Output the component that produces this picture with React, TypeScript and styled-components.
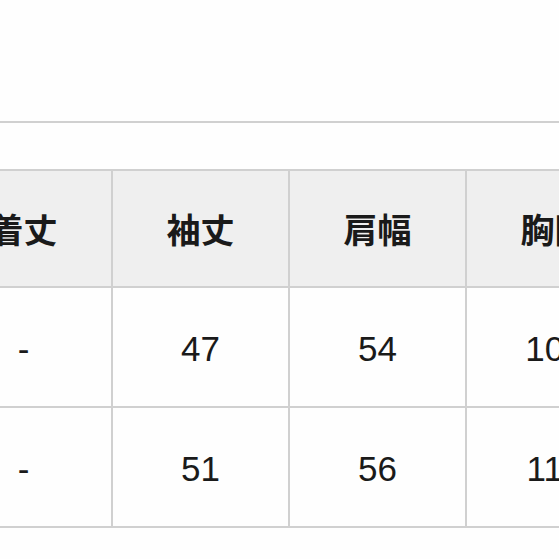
import React from "react";
import styled, { createGlobalStyle } from "styled-components";

const GlobalStyle = createGlobalStyle`
  html, body {
    margin: 0;
    padding: 0;
    background: #fefefe;
    overflow: hidden;
  }
  body {
    font-family: "Liberation Sans", "Noto Sans CJK JP", sans-serif;
    color: #1b1b1b;
  }
`;

const Page = styled.div`
  width: 559px;
  height: 559px;
  overflow: hidden;
  padding-top: 121px;
  box-sizing: border-box;
`;

const Divider = styled.div`
  height: 2px;
  background: #d0d0d0;
`;

const SizeTable = styled.table`
  width: 710px;
  min-width: 710px;
  margin-top: 46px;
  margin-left: -66px;
  border-collapse: collapse;
  table-layout: fixed;
`;

const HeadCell = styled.th`
  width: 175px;
  height: 115px;
  padding: 0;
  border: 2px solid #d0d0d0;
  background: #efefef;
  font-family: "Noto Sans CJK JP", "Liberation Sans", sans-serif;
  font-size: 34px;
  font-weight: 700;
  text-align: center;
  vertical-align: middle;
  color: #1a1a1a;
`;

const Cell = styled.td`
  width: 175px;
  height: 114px;
  padding: 4px 0 0;
  border: 2px solid #d0d0d0;
  background: #fefefe;
  font-family: "Liberation Sans", Arial, sans-serif;
  font-size: 35px;
  text-align: center;
  vertical-align: middle;
  color: #1a1a1a;
`;

const headers = ["着丈", "袖丈", "肩幅", "胸囲"];
const rows = [
  ["-", "47", "54", "104"],
  ["-", "51", "56", "112"],
];

export default function App() {
  return (
    <>
      <GlobalStyle />
      <Page>
        <Divider />
        <SizeTable>
          <thead>
            <tr>
              {headers.map((h) => (
                <HeadCell key={h}>{h}</HeadCell>
              ))}
            </tr>
          </thead>
          <tbody>
            {rows.map((r, i) => (
              <tr key={i}>
                {r.map((v, j) => (
                  <Cell key={j}>{v}</Cell>
                ))}
              </tr>
            ))}
          </tbody>
        </SizeTable>
      </Page>
    </>
  );
}
